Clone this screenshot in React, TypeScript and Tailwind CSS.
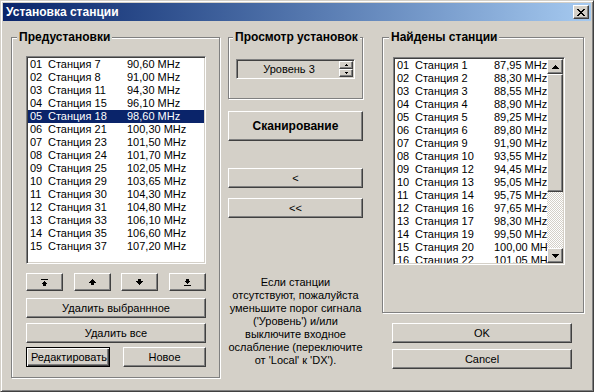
import React from "react";

const raised =
  "border border-t-white border-l-white border-r-[#404040] border-b-[#404040] shadow-[inset_-1px_-1px_0_#808080] bg-[#d4d0c8]";
const sunken =
  "border border-t-[#808080] border-l-[#808080] border-r-white border-b-white shadow-[inset_1px_1px_0_#404040,inset_-1px_-1px_0_#d4d0c8]";
const group =
  "relative border border-[#808080] shadow-[inset_1px_1px_0_#fff,1px_1px_0_#fff]";

function Pix({ rows, className = "" }: { rows: string[]; className?: string }) {
  const h = rows.length;
  const w = rows[0].length;
  const rects: React.ReactNode[] = [];
  rows.forEach((r, y) =>
    r.split("").forEach((c, x) => {
      if (c === "#") rects.push(<rect key={x + "-" + y} x={x} y={y} width={1} height={1} />);
    })
  );
  return (
    <svg width={w} height={h} viewBox={`0 0 ${w} ${h}`} shapeRendering="crispEdges" fill="#000" className={className}>
      {rects}
    </svg>
  );
}

const ICON_TOP = ["#######", ".......", "...#...", "..###..", ".#####.", "..###..", "..###.."];
const ICON_UP = ["...#...", "..###..", ".#####.", "#######", "..###..", "..###.."];
const ICON_DOWN = ["..###..", "..###..", "#######", ".#####.", "..###..", "...#..."];
const ICON_BOTTOM = ["..###..", "..###..", ".#####.", "..###..", "...#...", ".......", "#######"];
const SCROLL_UP = ["...#...", "..###..", ".#####.", "#######"];
const SCROLL_DOWN = ["#######", ".#####.", "..###..", "...#..."];
const SPIN_UP = ["..#..", ".###."];
const SPIN_DOWN = [".###.", "..#.."];
const CLOSE_X = [
  "##....##",
  ".##..##.",
  "..####..",
  "...##...",
  "..####..",
  ".##..##.",
  "##....##",
];

const presets: [string, string, string][] = [
  ["01", "Станция 7", "90,60 MHz"],
  ["02", "Станция 8", "91,00 MHz"],
  ["03", "Станция 11", "94,30 MHz"],
  ["04", "Станция 15", "96,10 MHz"],
  ["05", "Станция 18", "98,60 MHz"],
  ["06", "Станция 21", "100,30 MHz"],
  ["07", "Станция 23", "101,50 MHz"],
  ["08", "Станция 24", "101,70 MHz"],
  ["09", "Станция 25", "102,05 MHz"],
  ["10", "Станция 29", "103,65 MHz"],
  ["11", "Станция 30", "104,30 MHz"],
  ["12", "Станция 31", "104,80 MHz"],
  ["13", "Станция 33", "106,10 MHz"],
  ["14", "Станция 35", "106,60 MHz"],
  ["15", "Станция 37", "107,20 MHz"],
];

const found: [string, string, string][] = [
  ["01", "Станция 1", "87,95 MHz"],
  ["02", "Станция 2", "88,30 MHz"],
  ["03", "Станция 3", "88,55 MHz"],
  ["04", "Станция 4", "88,90 MHz"],
  ["05", "Станция 5", "89,25 MHz"],
  ["06", "Станция 6", "89,80 MHz"],
  ["07", "Станция 9", "91,90 MHz"],
  ["08", "Станция 10", "93,55 MHz"],
  ["09", "Станция 12", "94,45 MHz"],
  ["10", "Станция 13", "95,05 MHz"],
  ["11", "Станция 14", "95,75 MHz"],
  ["12", "Станция 16", "97,65 MHz"],
  ["13", "Станция 17", "98,30 MHz"],
  ["14", "Станция 19", "99,50 MHz"],
  ["15", "Станция 20", "100,00 MHz"],
  ["16", "Станция 22", "101,05 MHz"],
];

function Row({ r, selected = false }: { r: [string, string, string]; selected?: boolean }) {
  return (
    <div
      className={
        "flex h-[13px] shrink-0 items-center whitespace-nowrap pl-[2px] leading-[13px] " +
        (selected ? "bg-[#0a246a] text-white" : "text-black")
      }
    >
      <span className="w-[18px] shrink-0">{r[0]}</span>
      <span className="w-[79px] shrink-0">{r[1]}</span>
      <span className="shrink-0">{r[2]}</span>
    </div>
  );
}

function Button({
  children,
  className = "",
  bold = false,
}: {
  children: React.ReactNode;
  className?: string;
  bold?: boolean;
}) {
  return (
    <div
      className={
        raised +
        " flex items-center justify-center whitespace-nowrap text-black " +
        (bold ? "text-[12px] font-bold " : "") +
        className
      }
    >
      {children}
    </div>
  );
}

function GroupTitle({ children, className = "" }: { children: React.ReactNode; className?: string }) {
  return (
    <div
      className={
        "absolute -top-[8px] bg-[#d4d0c8] px-[2px] text-[12px] font-bold leading-[14px] text-black " + className
      }
    >
      {children}
    </div>
  );
}

export default function App() {
  return (
    <div className="font-['Liberation_Sans',Arial,sans-serif] text-[11px]">
      <div className="flex h-[392px] w-[594px] flex-col overflow-hidden border border-t-[#d4d0c8] border-l-[#d4d0c8] border-r-[#404040] border-b-[#404040] bg-[#d4d0c8] p-[2px] shadow-[inset_1px_1px_0_#fff,inset_-1px_-1px_0_#808080]">
        {/* Title bar */}
        <div className="flex h-[18px] shrink-0 items-center justify-between bg-linear-to-r from-[#0a246a] to-[#a6caf0] pl-[3px] pr-[2px]">
          <span className="text-[12px] font-bold leading-[14px] text-white">Установка станции</span>
          <div className={raised + " flex h-[14px] w-[16px] items-center justify-center"}>
            <Pix rows={CLOSE_X} />
          </div>
        </div>

        {/* Body */}
        <div className="flex items-start pl-[8px] pt-[16px]">
          {/* Left column */}
          <div className={group + " flex h-[341px] w-[209px] shrink-0 flex-col pl-[14px] pt-[18px]"}>
            <GroupTitle className="left-[5px]">Предустановки</GroupTitle>
            <div className={sunken + " flex h-[208px] w-[180px] flex-col overflow-hidden bg-white p-[1px]"}>
              {presets.map((r, i) => (
                <Row key={r[0]} r={r} selected={i === 4} />
              ))}
            </div>
            <div className="mt-[9px] flex w-[180px] justify-between">
              <Button className="h-[18px] w-[37px]">
                <Pix rows={ICON_TOP} />
              </Button>
              <Button className="h-[18px] w-[37px]">
                <Pix rows={ICON_UP} />
              </Button>
              <Button className="h-[18px] w-[37px]">
                <Pix rows={ICON_DOWN} />
              </Button>
              <Button className="h-[18px] w-[37px]">
                <Pix rows={ICON_BOTTOM} />
              </Button>
            </div>
            <Button className="mt-[7px] h-[20px] w-[180px]">Удалить выбраннное</Button>
            <Button className="mt-[5px] h-[20px] w-[180px]">Удалить все</Button>
            <div className="mt-[4px] flex w-[180px] justify-between">
              <div className="flex h-[20px] w-[84px] items-center justify-end overflow-hidden whitespace-nowrap border border-black bg-[#d4d0c8] pr-[2px] text-black shadow-[inset_1px_1px_0_#fff,inset_-1px_-1px_0_#404040,inset_-2px_-2px_0_#808080]">
                <span className="shrink-0">Редактировать</span>
              </div>
              <Button className="h-[20px] w-[83px]">Новое</Button>
            </div>
          </div>

          {/* Middle column */}
          <div className="ml-[8px] flex w-[135px] shrink-0 flex-col">
            <div className={group + " h-[62px] pl-[7px] pt-[21px]"}>
              <GroupTitle className="left-[4px]">Просмотр установок</GroupTitle>
              <div className={sunken + " flex h-[20px] w-[119px] items-center bg-[#d4d0c8] py-[1px] pr-[1px] pl-[2px]"}>
                <div className="flex-1 text-center leading-[13px] text-black">Уровень 3</div>
                <div className="flex h-[16px] w-[14px] flex-col">
                  <div className={raised + " flex h-[8px] items-center justify-center"}>
                    <Pix rows={SPIN_UP} />
                  </div>
                  <div className={raised + " flex h-[8px] items-center justify-center"}>
                    <Pix rows={SPIN_DOWN} />
                  </div>
                </div>
              </div>
            </div>
            <Button bold className="mt-[12px] h-[30px] w-[135px]">
              Сканирование
            </Button>
            <Button className="mt-[27px] h-[20px] w-[135px]">&lt;</Button>
            <Button className="mt-[10px] h-[20px] w-[135px]">&lt;&lt;</Button>
            <div className="mt-[58px] whitespace-nowrap text-center leading-[13px] text-black">
              Если станции
              <br />
              отсутствуют, пожалуйста
              <br />
              уменьшите порог сигнала
              <br />
              ('Уровень') и/или
              <br />
              выключите входное
              <br />
              ослабление (переключите
              <br />
              от 'Local' к 'DX').
            </div>
          </div>

          {/* Right column */}
          <div className="ml-[19px] flex w-[202px] shrink-0 flex-col">
            <div className={group + " h-[276px] pl-[10px] pt-[19px]"}>
              <GroupTitle className="left-[6px]">Найдены станции</GroupTitle>
              <div className={sunken + " flex h-[208px] w-[172px] bg-white p-[1px]"}>
                <div className="flex min-w-0 flex-1 flex-col overflow-hidden">
                  {found.map((r) => (
                    <Row key={r[0]} r={r} />
                  ))}
                </div>
                <div className="flex w-[16px] shrink-0 flex-col">
                  <div className={raised + " flex h-[15px] shrink-0 items-center justify-center"}>
                    <Pix rows={SCROLL_UP} />
                  </div>
                  <div className={raised + " h-[118px] shrink-0"} />
                  <div className="flex-1 bg-[image:repeating-conic-gradient(#d4d0c8_0%_25%,#ffffff_0%_50%)] bg-[length:2px_2px]" />
                  <div className={raised + " flex h-[15px] shrink-0 items-center justify-center"}>
                    <Pix rows={SCROLL_DOWN} />
                  </div>
                </div>
              </div>
            </div>
            <Button className="mt-[10px] ml-[10px] h-[20px] w-[180px]">OK</Button>
            <Button className="mt-[6px] ml-[10px] h-[20px] w-[180px]">Cancel</Button>
          </div>
        </div>
      </div>
    </div>
  );
}
